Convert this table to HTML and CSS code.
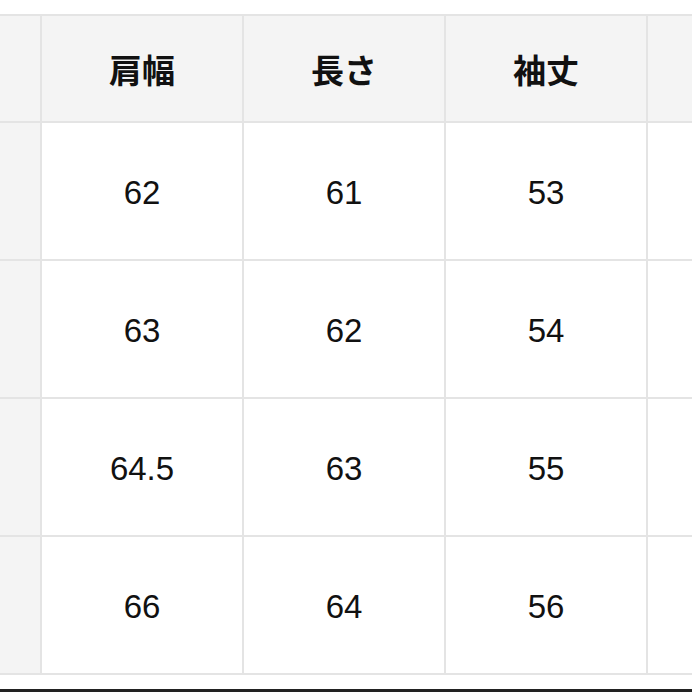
FILE: index.html
```html
<!DOCTYPE html>
<html lang="ja">
<head>
<meta charset="utf-8">
<link rel="stylesheet" href="styles.css">
</head>
<body>
<div class="page">
  <div class="sheet">
    <div class="cell head side"></div>
    <div class="cell head">肩幅</div>
    <div class="cell head">長さ</div>
    <div class="cell head">袖丈</div>
    <div class="cell head"></div>

    <div class="cell side"></div>
    <div class="cell">62</div>
    <div class="cell">61</div>
    <div class="cell">53</div>
    <div class="cell"></div>

    <div class="cell side"></div>
    <div class="cell">63</div>
    <div class="cell">62</div>
    <div class="cell">54</div>
    <div class="cell"></div>

    <div class="cell side"></div>
    <div class="cell">64.5</div>
    <div class="cell">63</div>
    <div class="cell">55</div>
    <div class="cell"></div>

    <div class="cell side"></div>
    <div class="cell">66</div>
    <div class="cell">64</div>
    <div class="cell">56</div>
    <div class="cell"></div>
  </div>
  <div class="rule"></div>
</div>
</body>
</html>
```

FILE: styles.css
```css
html, body {
  margin: 0;
  padding: 0;
  background: #ffffff;
}
body {
  width: 692px;
  height: 692px;
  overflow: hidden;
  font-family: "Liberation Sans", "Noto Sans CJK JP", sans-serif;
  color: #111111;
}
.page {
  display: flex;
  flex-direction: column;
  padding-top: 14px;
  width: 692px;
  height: 692px;
  box-sizing: border-box;
  overflow: hidden;
}
.sheet {
  display: grid;
  grid-template-columns: repeat(5, 200px);
  grid-template-rows: 105px repeat(4, 136px);
  gap: 2px;
  padding: 2px;
  background: #e4e4e4;
  margin-left: -162px;
  width: max-content;
  flex: none;
}
.cell {
  background: #ffffff;
  display: flex;
  align-items: center;
  justify-content: center;
  font-size: 33px;
  padding-top: 3px;
}
.head {
  background: #f4f4f4;
  font-weight: 700;
  font-size: 33px;
  padding-top: 0;
}
.side {
  background: #f4f4f4;
}
.rule {
  margin-top: 14px;
  height: 3px;
  flex: none;
  background: #222222;
}
```
